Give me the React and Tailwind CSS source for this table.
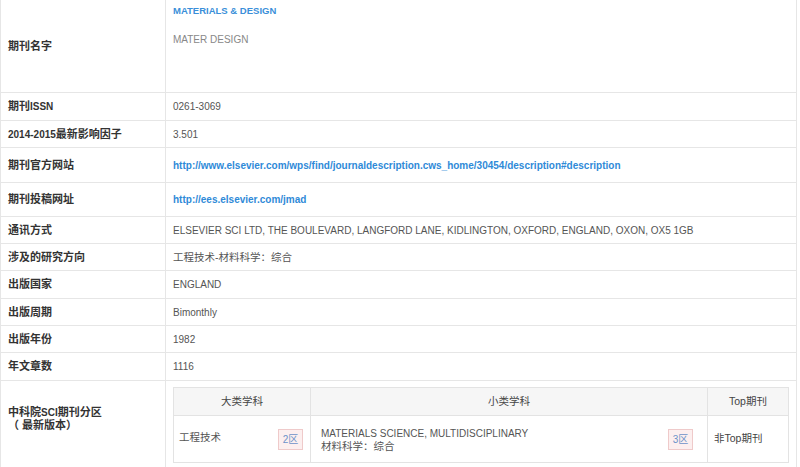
import React from "react";

const FONT = { fontFamily: '"Liberation Sans", Arial, "Noto Sans CJK SC", sans-serif' };

function L({ children }) {
  return <span className="text-[10px]">{children}</span>;
}

function Row({ h, label, children, last }) {
  return (
    <div className={`flex ${h} ${last ? "" : "border-b border-[#e6e6e6]"}`}>
      <div className="w-[165px] shrink-0 border-r border-[#e6e6e6] pl-[7px] flex items-center text-[11px] leading-[13px] font-bold text-[#333]">
        {label}
      </div>
      <div className="flex-1 pl-[7px] flex items-center text-[10px] leading-[13px] text-[#555]">
        {children}
      </div>
    </div>
  );
}

function Badge({ children }) {
  return (
    <span className="inline-flex items-center justify-center w-[25px] h-[21px] bg-[#fcefef] border border-[#efcaca] text-[10px] text-[#6c93c9]">
      {children}
    </span>
  );
}

export default function App() {
  return (
    <div className="w-[800px] h-[467px] bg-white overflow-hidden" style={FONT}>
      <div className="w-[797px] border-l border-r border-[#e6e6e6]">
        <div className="flex h-[93px] border-b border-[#e6e6e6]">
          <div className="w-[165px] shrink-0 border-r border-[#e6e6e6] pl-[7px] flex items-center text-[11px] leading-[13px] font-bold text-[#333]">
            期刊名字
          </div>
          <div className="flex-1 pl-[7px] pt-[2px] flex flex-col items-start">
            <div className="text-[9.5px] leading-[18px] font-bold text-[#3a8fd9]">MATERIALS &amp; DESIGN</div>
            <div className="mt-[11px] text-[10px] leading-[18px] text-[#888]">MATER DESIGN</div>
          </div>
        </div>
        <Row h="h-[28px]" label={<span>期刊<L>ISSN</L></span>}>0261-3069</Row>
        <Row h="h-[27px]" label={<span><L>2014-2015</L>最新影响因子</span>}>3.501</Row>
        <Row h="h-[35px]" label="期刊官方网站">
          <span className="font-bold text-[#2f8ad8]">
            http://www.elsevier.com/wps/find/journaldescription.cws_home/30454/description#description
          </span>
        </Row>
        <Row h="h-[34px]" label="期刊投稿网址">
          <span className="font-bold text-[#2f8ad8]">http://ees.elsevier.com/jmad</span>
        </Row>
        <Row h="h-[27px]" label="通讯方式">
          ELSEVIER SCI LTD, THE BOULEVARD, LANGFORD LANE, KIDLINGTON, OXFORD, ENGLAND, OXON, OX5 1GB
        </Row>
        <Row h="h-[27px]" label="涉及的研究方向">
          <span className="text-[10.5px]">工程技术-材料科学：综合</span>
        </Row>
        <Row h="h-[28px]" label="出版国家">ENGLAND</Row>
        <Row h="h-[27px]" label="出版周期">Bimonthly</Row>
        <Row h="h-[27px]" label="出版年份">1982</Row>
        <Row h="h-[28px]" label="年文章数">1116</Row>
        <div className="flex h-[90px]">
          <div className="w-[165px] shrink-0 border-r border-[#e6e6e6] pl-[7px] pt-[25px] text-[11px] leading-[13px] font-bold text-[#333]">
            <div>中科院<L>SCI</L>期刊分区</div>
            <div>（ 最新版本）</div>
          </div>
          <div className="flex-1 pl-[7px] pt-[6px]">
            <div className="w-[616px] border border-[#e3e3e3] text-[10px] text-[#555]">
              <div className="flex h-[28px] bg-[#f6f6f6] border-b border-[#e3e3e3] text-[10.5px] text-[#444]">
                <div className="w-[137px] border-r border-[#e3e3e3] flex items-center justify-center">大类学科</div>
                <div className="w-[397px] border-r border-[#e3e3e3] flex items-center justify-center">小类学科</div>
                <div className="flex-1 flex items-center justify-center">Top期刊</div>
              </div>
              <div className="flex h-[46px] bg-white">
                <div className="w-[137px] border-r border-[#e3e3e3] pl-[5px] pr-[7px] flex items-center justify-between">
                  <span className="text-[10.5px] mt-[-2px]">工程技术</span>
                  <Badge>2区</Badge>
                </div>
                <div className="w-[397px] border-r border-[#e3e3e3] pl-[10px] pr-[14px] flex items-center justify-between">
                  <div className="leading-[13px] mt-[2px]">
                    <div>MATERIALS SCIENCE, MULTIDISCIPLINARY</div>
                    <div className="text-[10.5px]">材料科学：综合</div>
                  </div>
                  <Badge>3区</Badge>
                </div>
                <div className="flex-1 pl-[6px] flex items-center text-[10.5px] text-[#444]">非Top期刊</div>
              </div>
            </div>
          </div>
        </div>
      </div>
    </div>
  );
}
